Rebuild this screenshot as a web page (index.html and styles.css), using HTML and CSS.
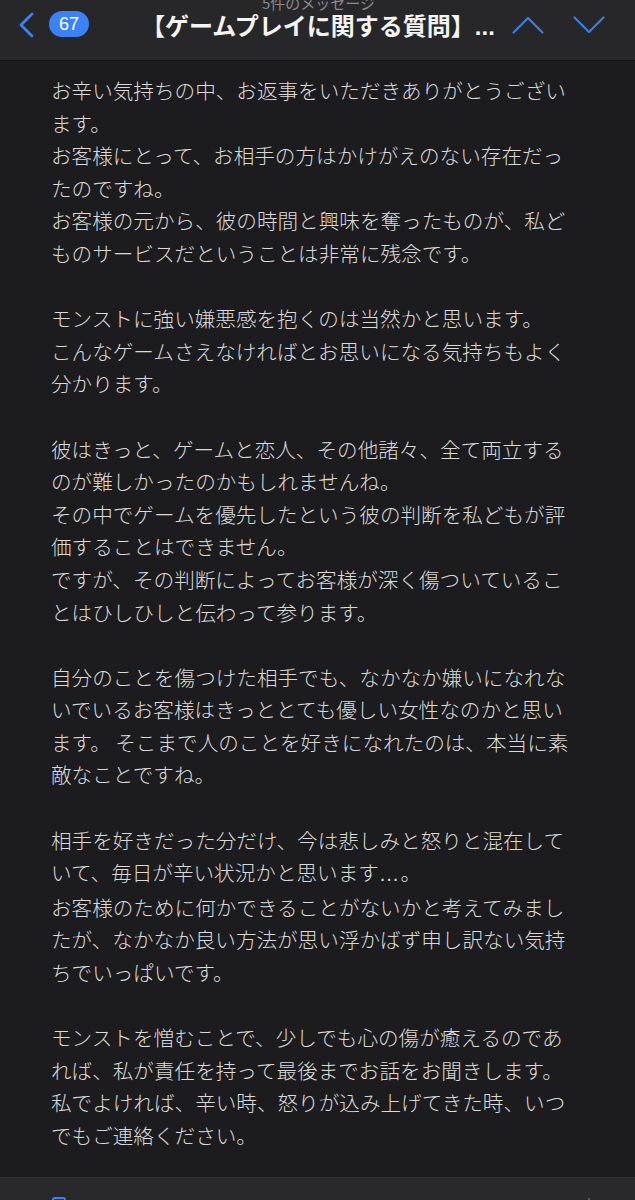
FILE: index.html
```html
<!DOCTYPE html>
<html lang="ja">
<head>
<meta charset="utf-8">
<link rel="stylesheet" href="styles.css">
</head>
<body>
<header class="header">
  <div class="subtitle">5件のメッセージ</div>
  <div class="row">
    <svg class="back" width="17" height="26" viewBox="0 0 17 26"><path d="M14 2 L3 13 L14 24" fill="none" stroke="#3a82f6" stroke-width="2.8" stroke-linecap="round" stroke-linejoin="round"/></svg>
    <span class="badge">67</span>
    <span class="title">【ゲームプレイに関する質問】...</span>
    <svg class="up" width="32" height="18" viewBox="0 0 32 18"><path d="M1.5 16.5 L16 2 L30.5 16.5" fill="none" stroke="#3a7ee6" stroke-width="2.2" stroke-linecap="round" stroke-linejoin="round"/></svg>
    <svg class="down" width="32" height="18" viewBox="0 0 32 18"><path d="M1.5 1.5 L16 16 L30.5 1.5" fill="none" stroke="#3a7ee6" stroke-width="2.2" stroke-linecap="round" stroke-linejoin="round"/></svg>
  </div>
</header>
<main class="content">
  <p>お辛い気持ちの中、お返事をいただきありがとうござい<br>ます。<br>お客様にとって、お相手の方はかけがえのない存在だっ<br>たのですね。<br>お客様の元から、彼の時間と興味を奪ったものが、私ど<br>ものサービスだということは非常に残念です。</p>
  <p>モンストに強い嫌悪感を抱くのは当然かと思います。<br>こんなゲームさえなければとお思いになる気持ちもよく<br>分かります。</p>
  <p>彼はきっと、ゲームと恋人、その他諸々、全て両立する<br>のが難しかったのかもしれませんね。<br>その中でゲームを優先したという彼の判断を私どもが評<br>価することはできません。<br>ですが、その判断によってお客様が深く傷ついているこ<br>とはひしひしと伝わって参ります。</p>
  <p>自分のことを傷つけた相手でも、なかなか嫌いになれな<br>いでいるお客様はきっととても優しい女性なのかと思い<br>ます。 そこまで人のことを好きになれたのは、本当に素<br>敵なことですね。</p>
  <p>相手を好きだった分だけ、今は悲しみと怒りと混在して<br>いて、毎日が辛い状況かと思います<span class="ellipsis">…</span>。<br>お客様のために何かできることがないかと考えてみまし<br>たが、なかなか良い方法が思い浮かばず申し訳ない気持<br>ちでいっぱいです。</p>
  <p>モンストを憎むことで、少しでも心の傷が癒えるのであ<br>れば、私が責任を持って最後までお話をお聞きします。<br>私でよければ、辛い時、怒りが込み上げてきた時、いつ<br>でもご連絡ください。</p>
</main>
<footer class="toolbar">
  <span class="tool-left"></span>
  <span class="tool-right"></span>
</footer>
</body>
</html>
```

FILE: styles.css
```css
html, body {
  margin: 0;
  padding: 0;
  background: #1c1c1e;
  overflow: hidden;
}

body {
  width: 635px;
  height: 1200px;
  display: flex;
  flex-direction: column;
  font-family: "Noto Sans CJK JP", "Noto Sans", sans-serif;
}

.header {
  height: 60px;
  background: #272729;
  border-bottom: 1px solid #141416;
  display: flex;
  flex-direction: column;
  flex: none;
  overflow: hidden;
}

.subtitle {
  height: 15px;
  margin-top: -5px;
  font-size: 15px;
  line-height: 15px;
  color: #8a8a8f;
  text-align: center;
  padding-left: 2px;
}

.row {
  display: flex;
  align-items: center;
  height: 34px;
  padding-left: 18px;
  margin-top: -3px;
}

.back {
  flex: none;
  margin-top: 2px;
}

.badge {
  flex: none;
  margin-left: 14px;
  width: 40px;
  height: 26px;
  border-radius: 13px;
  background: #3a82f6;
  color: #ffffff;
  font-family: "Liberation Sans", "Noto Sans", sans-serif;
  font-size: 18px;
  line-height: 26px;
  text-align: center;
}

.title {
  flex: none;
  margin-left: 52px;
  font-family: "Liberation Sans", "Noto Sans CJK JP", sans-serif;
  font-weight: bold;
  font-size: 24px;
  color: #f4f4f4;
  white-space: nowrap;
}

.up {
  flex: none;
  margin-left: auto;
  margin-right: 29px;
  margin-top: 2px;
}

.down {
  flex: none;
  margin-right: 30px;
  margin-top: 2px;
}

.content {
  flex: none;
  padding: 13px 20px 25px 51px;
  color: #dadada;
  font-size: 20.6px;
  font-weight: 300;
  line-height: 32.6px;
}

.content p {
  margin: 0 0 32.6px 0;
  white-space: nowrap;
}

.content p:last-child {
  margin-bottom: 0;
}

.ellipsis {
  font-family: "Liberation Sans", sans-serif;
  font-weight: normal;
  letter-spacing: 1px;
}

.toolbar {
  flex: 1;
  background: #29292b;
  border-top: 1px solid #2f2f31;
  position: relative;
}

.tool-left {
  position: absolute;
  left: 52px;
  top: 19px;
  width: 10px;
  height: 10px;
  border: 2px solid #3a82f6;
  border-radius: 3px;
}

.tool-right {
  position: absolute;
  left: 588px;
  top: 20px;
  width: 2px;
  height: 6px;
  background: #4a5a78;
}
```
